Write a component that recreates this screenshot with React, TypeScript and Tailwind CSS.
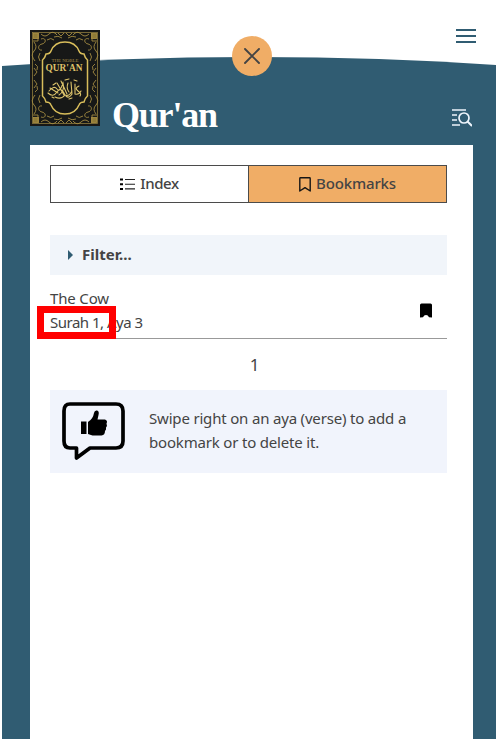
import React from "react";

const sans = "font-['Noto_Sans','Open_Sans',sans-serif]";

function Corner({ transform }: { transform: string }) {
  return (
    <g transform={transform} fill="none" stroke="#a48b42" strokeWidth="0.9">
      <rect x="3.5" y="3.5" width="5" height="5" fill="#8f7b38" />
      <path d="M3 11h5V3M11 4q4 4 8 0t8 1M4 12q4 5 0 9t1 10M11 9c5-2 6 4 1 5-5 1-4 7 0 6M17 10q4-3 7 0M10 23q-3 4 0 8" />
      <path d="M28 3l3 3 3-3M4 38l3 4-3 4M5 34q4 2 2 6M24 7q4-2 8 1" />
    </g>
  );
}

function BookCover() {
  return (
    <svg width="70" height="96" viewBox="0 0 70 96" className="block">
      <rect width="70" height="96" fill="#171817" />
      <rect x="2.5" y="2.5" width="65" height="91" fill="none" stroke="#8d7b3c" strokeWidth="0.8" />
      <Corner transform="" />
      <Corner transform="matrix(-1 0 0 1 70 0)" />
      <Corner transform="matrix(1 0 0 -1 0 96)" />
      <Corner transform="matrix(-1 0 0 -1 70 96)" />
      <path
        d="M35 12C28 12 23 16 21 21Q20 24 16 24Q15 28 12.500 30V66Q15 68 16 72Q20 72 21 75C23 80 28 84 35 84S47 80 49 75Q50 72 54 72Q55 68 57.500 66V30Q55 28 54 24Q50 24 49 21C47 16 42 12 35 12Z"
        fill="#171817"
        stroke="#d8bd5b"
        strokeWidth="1.500"
      />
      <text x="35" y="31.500" textAnchor="middle" textLength="27" fontSize="5" fill="#a38c46" fontFamily="Liberation Serif, serif">THE NOBLE</text>
      <text x="34" y="40.500" textAnchor="middle" textLength="37" lengthAdjust="spacingAndGlyphs" fontSize="9.500" fontWeight="bold" fill="#dec16a" fontFamily="Liberation Serif, serif">QUR'AN</text>
      <g fill="none" stroke="#dcc36b" strokeWidth="1.100" strokeLinecap="round">
        <path d="M18 63q5 5 9-1t8 3q4 2 7-4M20 58l8 5M19 61q5-6 8-2t6-6q2 8-4 12M27 53l7 12M31 51l6 13M25 67q6 3 10-2M38 53q-2 5 1 9M41 52l1 12q-3 5-6 2M45 54v10q4 1 6-3M49 56q-5 2-1 5t2 5" />
        <path d="M23 55l3-2M35 50l4-1M44 50l3 1M22 67l2 1M39 69l3-1" />
      </g>
    </svg>
  );
}

function BookmarkIcon({ filled, className }: { filled?: boolean; className?: string }) {
  return (
    <svg width="12" height="15" viewBox="0 0 12 15" className={className}>
      <path
        d={filled ? "M1.500 .5h9q1.500 0 1.500 1.500v12.500L9 14.200Q8 12 6 12T3 14.200L0 14.500V2Q0 .5 1.500 .5Z" : "M1.500 .8h9q.7 0 .7.700V14L6 10.600.8 14V1.500q0-.7.7-.7Z"}
        fill={filled ? "#000" : "none"}
        stroke={filled ? "none" : "#151515"}
        strokeWidth="1.400"
        strokeLinejoin="round"
      />
    </svg>
  );
}

export default function App() {
  return (
    <div className={`relative flex h-[742px] w-[496px] flex-col overflow-hidden bg-white pl-0.5 text-[#444] ${sans}`}>
      <header className="flex h-[57px] shrink-0 justify-end pr-5 pt-[29px]">
        <button aria-label="Menu" className="flex h-3.5 w-5 flex-col justify-between">
          <span className="h-0.5 w-full bg-[#305c72]" />
          <span className="h-0.5 w-full bg-[#305c72]" />
          <span className="h-0.5 w-full bg-[#305c72]" />
        </button>
      </header>
      <svg width="494" height="10" viewBox="0 0 494 10" className="block shrink-0">
        <path d="M0 9Q120 0 250 0T494 8V10H0Z" fill="#305c72" />
      </svg>
      <div className="flex h-[672px] flex-col bg-[#305c72] pl-7 pr-[23px]">
        <div className="flex h-[78px] shrink-0 items-start justify-between pl-[82px]">
          <h1 className="mt-[26px] font-['Liberation_Serif',serif] text-[36px] font-bold leading-[44px] tracking-[-1.2px] text-white">Qur'an</h1>
          <svg width="20" height="18" viewBox="0 0 20 18" fill="none" stroke="#edf4fb" strokeWidth="1.700" className="mr-px mt-[42px]">
            <path d="M0 1h14M0 6h5M0 11h5M0 16h8" />
            <circle cx="12" cy="9" r="5" />
            <path d="M15.500 12.500L20 17" strokeWidth="2" />
          </svg>
        </div>
        <main className="flex h-[594px] flex-col bg-white pl-5 pr-[26px] pt-5">
          <div className="flex h-[38px] shrink-0 border border-[#4b4b4b] text-[15px] font-medium">
            <button className="flex w-[198px] items-center justify-center gap-[5px] border-r border-[#4b4b4b]">
              <svg width="15" height="12" viewBox="0 0 15 12" stroke="#222">
                <path d="M0 1.500h3M0 6.200h3M0 10.900h3" strokeWidth="2" stroke="#000" />
                <path d="M5 1.500h10M5 6.200h10M5 10.900h10" strokeWidth="1.100" />
              </svg>
              <span className="pb-0.5 tracking-[-0.4px]">Index</span>
            </button>
            <button className="flex flex-1 items-center justify-center gap-[5px] bg-[#f0ad66]">
              <BookmarkIcon />
              <span className="pb-0.5 tracking-[-0.15px]">Bookmarks</span>
            </button>
          </div>
          <div className="mt-8 flex h-10 shrink-0 items-center bg-[#f1f5fa] pl-[18px]">
            <svg width="5" height="10" viewBox="0 0 5 10"><path d="M0 0L5 5L0 10Z" fill="#305c72" /></svg>
            <span className="ml-[9px] pb-0.5 text-[15px] font-bold">Filter...</span>
          </div>
          <div className="relative flex h-16 shrink-0 items-start justify-between border-b border-[#999] pt-[11px] text-[15px] leading-6">
            <div>
              <p className="tracking-[-0.15px]">The Cow</p>
              <p className="tracking-[-0.5px]">Surah 1, Aya 3</p>
            </div>
            <BookmarkIcon filled className="mr-[15px] mt-[17px]" />
            <div className="absolute left-[-13px] top-[31px] h-[33px] w-[79px] border-[7px] border-[#f00]" />
          </div>
          <div className="flex h-[51px] shrink-0 items-center justify-center pl-3 text-[17px]">1</div>
          <div className="flex h-[83px] shrink-0 bg-[#f1f4fc] pl-3 pt-3">
            <svg width="64" height="58" viewBox="0 0 64 58" className="shrink-0">
              <path d="M8 2h46q7 0 7 7v30q0 7-7 7H28L14.500 56V46H8q-6 0-6-7V9q0-7 6-7Z" fill="none" stroke="#000" strokeWidth="3.700" strokeLinejoin="round" />
              <path d="M19 19.500h5.500V32H19ZM26 20q5-3 6-9 .500-3 3-2.500 2.500.5 1.500 4.500l-1 4.500H43q3 1 1.500 4 1 2-.5 4 .5 2-1 3.500 0 4-3.500 4.500h-9L26 32Z" fill="#000" />
            </svg>
            <p className="ml-[23px] mt-1 whitespace-nowrap text-[15px] leading-6 tracking-[-0.18px]">
              Swipe right on an aya (verse) to add a<br />bookmark or to delete it.
            </p>
          </div>
        </main>
      </div>
      <div className="absolute left-[30px] top-[30px]"><BookCover /></div>
      <button aria-label="Close" className="absolute left-[232px] top-9 flex size-10 items-center justify-center rounded-full bg-[#f0ad66]">
        <svg width="16" height="16" viewBox="0 0 16 16" stroke="#444" strokeWidth="1.900" strokeLinecap="round"><path d="M1 1L15 15M15 1L1 15" /></svg>
      </button>
    </div>
  );
}
